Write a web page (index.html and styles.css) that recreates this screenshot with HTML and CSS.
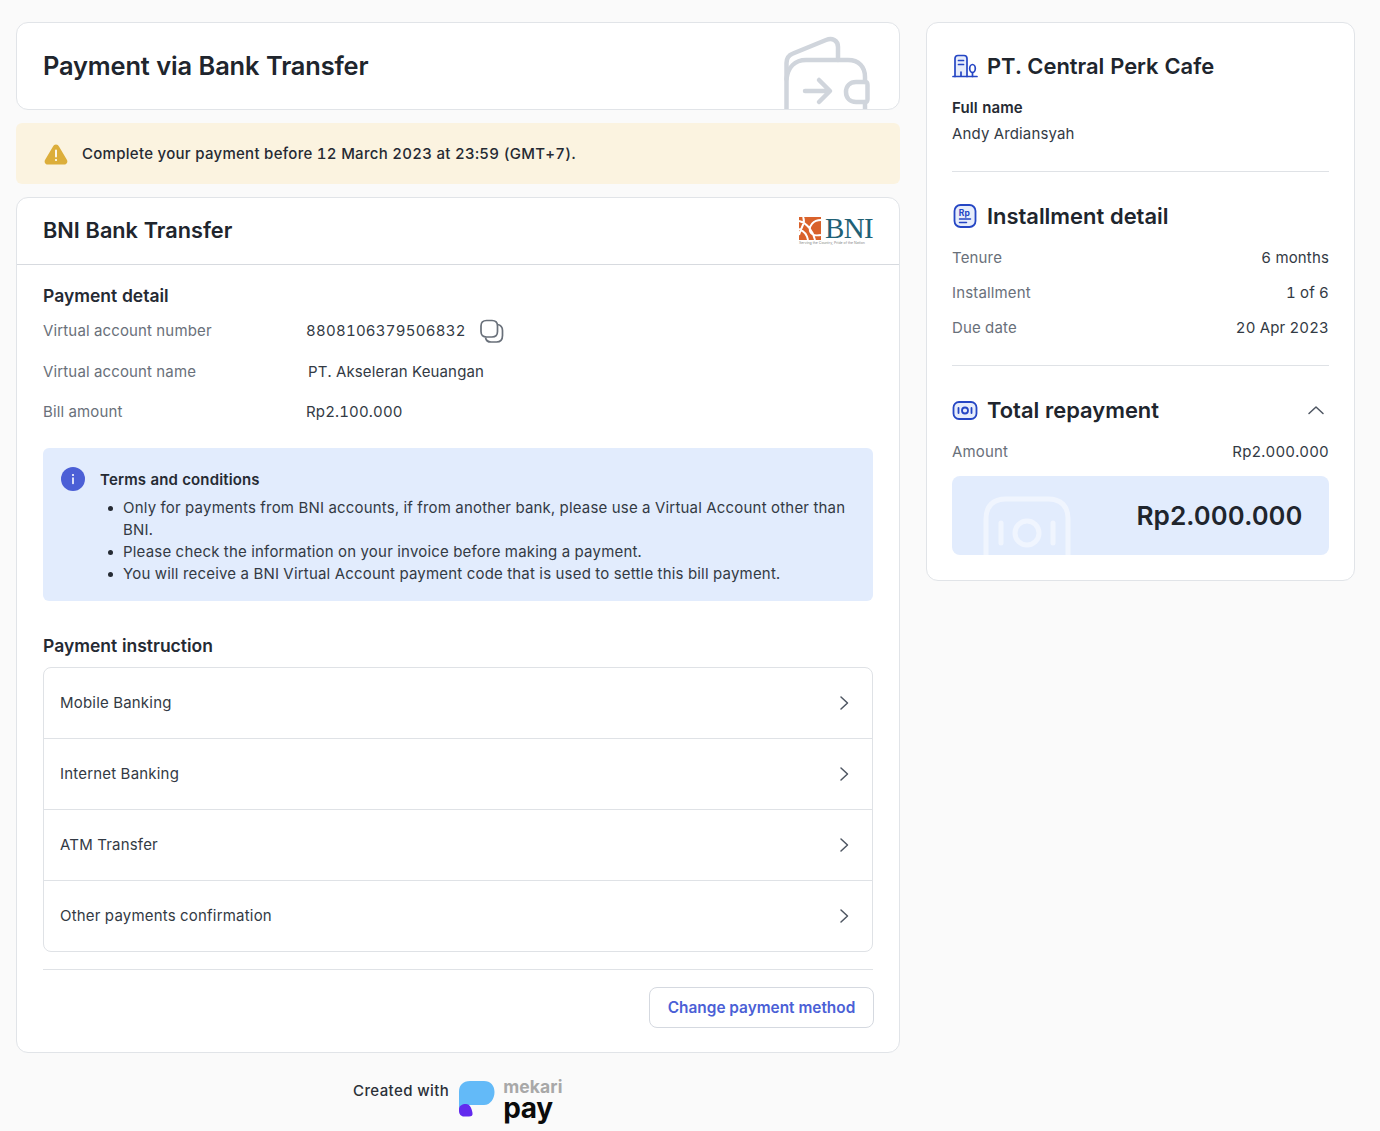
FILE: index.html
```html
<!DOCTYPE html>
<html lang="en">
<head>
<meta charset="utf-8">
<title>Payment via Bank Transfer</title>
<link rel="stylesheet" href="styles.css">
</head>
<body>
<div class="layout">
  <main class="left">
    <section class="card hero">
      <h1>Payment via Bank Transfer</h1>
      <svg class="wallet" width="90" height="74" viewBox="0 0 90 74" fill="none" stroke="#d0d5dc" stroke-width="4.5" stroke-linecap="round" stroke-linejoin="round">
        <path d="M4.500 76V28C4.500 23 7 20 11 18.500L44 5C50 2.500 56 5 56 12V25"/>
        <path d="M4.500 44C6 32 13 25 24 25H66C77 25 83 32 83 42V47M83 67V76"/>
        <path d="M23 56H47M37 45L48 56L37 67"/>
        <path d="M74 47H83C85 47 85.500 48 85.500 50V64C85.500 66 85 67 83 67H74C68 67 64 63 64 57C64 51 68 47 74 47Z"/>
      </svg>
    </section>

    <div class="banner">
      <svg class="warn" width="26" height="24" viewBox="0 0 26 24"><path d="M13 2.500C11.500 2.500 10.700 3.400 10 4.600L2 18C1 20 2.200 22.500 4.500 22.500H21.500C23.800 22.500 25 20 24 18L16 4.600C15.300 3.400 14.500 2.500 13 2.500Z" fill="#dcae3b"/><path d="M13 8.500V14.500" stroke="#fff" stroke-width="1.800" stroke-linecap="round"/><circle cx="13" cy="18" r="1.100" fill="#fff"/></svg>
      <span>Complete your payment before 12 March 2023 at 23:59 (GMT+7).</span>
    </div>

    <section class="card detail">
      <header class="detail-head">
        <h2>BNI Bank Transfer</h2>
        <div class="bni">
          <svg width="22" height="23" viewBox="0 0 22 23"><rect width="22" height="23" fill="#d9622b"/><path d="M0 4C8 6 14 14 16 23M0 12C5 14 8 18 9 23M4 0C7 6 2 10 0 18M22 3C14 3 10 9 11 14C12 18 17 19 22 18" fill="none" stroke="#fff" stroke-width="2"/></svg>
          <span class="bni-name">BNI</span>
          <span class="bni-tag">Serving the Country, Pride of the Nation</span>
        </div>
      </header>

      <div class="detail-body">
        <h3 class="pd-title">Payment detail</h3>
        <dl class="facts">
          <div class="fact fact-va"><dt>Virtual account number</dt><dd class="va">8808106379506832
            <svg class="copy" width="26" height="26" viewBox="0 0 26 26" fill="none" stroke="#69707a" stroke-width="1.700"><path d="M8.500 2.500H14C17.500 2.500 19.500 4.500 19.500 8V13.500C19.500 17 17.500 19 14 19H8.500C5 19 3 17 3 13.500V8C3 4.500 5 2.500 8.500 2.500Z"/><path d="M19.500 6.500C22.500 7 24.500 9 24.500 12.500V17.500C24.500 21.500 22.500 24 18.500 24H13C10 24 8 22.500 7.500 19.500"/></svg>
          </dd></div>
          <div class="fact fact-name"><dt>Virtual account name</dt><dd class="shift">PT. Akseleran Keuangan</dd></div>
          <div class="fact fact-bill"><dt>Bill amount</dt><dd>Rp2.100.000</dd></div>
        </dl>

        <div class="terms">
          <svg class="info" width="24" height="24" viewBox="0 0 24 24"><circle cx="12" cy="12" r="12" fill="#4b5fd6"/><circle cx="12" cy="8" r="1.100" fill="#fff"/><path d="M12 11V16.500" stroke="#fff" stroke-width="1.600" stroke-linecap="round"/></svg>
          <div class="terms-body">
            <h4>Terms and conditions</h4>
            <ul>
              <li>Only for payments from BNI accounts, if from another bank, please use a Virtual Account other than BNI.</li>
              <li>Please check the information on your invoice before making a payment.</li>
              <li>You will receive a BNI Virtual Account payment code that is used to settle this bill payment.</li>
            </ul>
          </div>
        </div>

        <h3 class="pi-title">Payment instruction</h3>
        <div class="accordion">
          <div class="acc-row"><span>Mobile Banking</span><svg width="10" height="16" viewBox="0 0 10 16" fill="none" stroke="#4e5662" stroke-width="1.500" stroke-linecap="round" stroke-linejoin="round"><path d="M2 2L8.500 8L2 14"/></svg></div>
          <div class="acc-row"><span>Internet Banking</span><svg width="10" height="16" viewBox="0 0 10 16" fill="none" stroke="#4e5662" stroke-width="1.500" stroke-linecap="round" stroke-linejoin="round"><path d="M2 2L8.500 8L2 14"/></svg></div>
          <div class="acc-row"><span>ATM Transfer</span><svg width="10" height="16" viewBox="0 0 10 16" fill="none" stroke="#4e5662" stroke-width="1.500" stroke-linecap="round" stroke-linejoin="round"><path d="M2 2L8.500 8L2 14"/></svg></div>
          <div class="acc-row"><span>Other payments confirmation</span><svg width="10" height="16" viewBox="0 0 10 16" fill="none" stroke="#4e5662" stroke-width="1.500" stroke-linecap="round" stroke-linejoin="round"><path d="M2 2L8.500 8L2 14"/></svg></div>
        </div>

        <div class="actions"><button class="btn" type="button">Change payment method</button></div>
      </div>
    </section>

    <footer class="credit">
      <span class="credit-text">Created with</span>
      <svg width="37" height="37" viewBox="0 0 37 37"><path d="M12 1H26C32.500 1 36.500 5.500 36.500 12C36.500 18.500 32.500 25 26 25H13C9 25 8 26 7 26C3 26 1 27 1 29V12C1 5 5 1 12 1Z" fill="#63baf8"/><path d="M1 29C1 26 4 24 8 24C12 24 14 29 14.500 33C15 35.500 13.500 36.500 11 36.500H6C3 36.500 1 34 1 31Z" fill="#6229ee"/></svg>
      <div class="brand"><span class="brand-top">mekari</span><span class="brand-pay">pay</span></div>
    </footer>
  </main>

  <aside class="card side">
    <section class="side-sec sec-company">
      <div class="side-head">
        <svg width="26" height="24" viewBox="0 0 26 24" fill="none" stroke="#2546c4" stroke-width="1.700" stroke-linecap="round"><path d="M3 22.500V4.500C3 2.500 4 1.500 6 1.500H12C14 1.500 15 2.500 15 4.500V22.500" fill="#e7edfb"/><path d="M6.500 6.500H11.500M6.500 10.500H11.500M9 18V22"/><path d="M1 22.500H25"/><ellipse cx="20.500" cy="14.500" rx="2.800" ry="4"/><path d="M20.500 18.500V22.500"/></svg>
        <h2>PT. Central Perk Cafe</h2>
      </div>
      <div class="name-label">Full name</div>
      <div class="name-value">Andy Ardiansyah</div>
    </section>

    <section class="side-sec sec-install">
      <div class="side-head">
        <svg width="26" height="24" viewBox="0 0 26 24" fill="none" stroke="#2546c4" stroke-width="1.800"><rect x="2.500" y="1" width="21" height="22" rx="6" fill="#e7edfb"/><text class="rp" x="6.800" y="11.500">Rp</text><path d="M7.500 15H18.500M7.500 18.500H14.500" stroke-width="1.500" stroke-linecap="round"/></svg>
        <h2>Installment detail</h2>
      </div>
      <div class="kv kv-first"><span>Tenure</span><b>6 months</b></div>
      <div class="kv"><span>Installment</span><b>1 of 6</b></div>
      <div class="kv"><span>Due date</span><b>20 Apr 2023</b></div>
    </section>

    <section class="sec-total">
      <div class="side-head total-head">
        <svg width="26" height="24" viewBox="0 0 26 24" fill="none" stroke="#2546c4" stroke-width="1.800" stroke-linecap="round"><rect x="1.500" y="4" width="23" height="17" rx="5.500" fill="#e7edfb"/><circle cx="13" cy="12.500" r="3"/><path d="M6.500 10V15M19.500 10V15"/></svg>
        <h2>Total repayment</h2>
        <svg class="caret" width="18" height="10" viewBox="0 0 18 10" fill="none" stroke="#4e5662" stroke-width="1.500" stroke-linecap="round" stroke-linejoin="round"><path d="M2 8.500L9 2L16 8.500"/></svg>
      </div>
      <div class="kv kv-first"><span>Amount</span><b>Rp2.000.000</b></div>
      <div class="total-box">
        <svg class="total-bg" width="88" height="59" viewBox="0 0 88 59" fill="none" stroke="#f0f5fe" stroke-width="5" stroke-linecap="round"><path d="M3 59V23C3 10 10 3 23 3H65C78 3 85 10 85 23V59"/><circle cx="44" cy="37" r="12"/><path d="M18 27V47M70 27V47"/></svg>
        <span>Rp2.000.000</span>
      </div>
    </section>
  </aside>
</div>
</body>
</html>
```

FILE: styles.css
```css
* { box-sizing: border-box; }
html, body { margin: 0; padding: 0; }
body {
  background: #fafafa;
  color: #252a33;
  font-family: Inter, "Liberation Sans", sans-serif;
  font-size: 15px;
  letter-spacing: 0.15px;
  font-variant-numeric: tabular-nums;
  height: 1131px;
  overflow: hidden;
}
h1, h2, h3, h4, dl, dd, ul { margin: 0; padding: 0; }

.layout {
  display: grid;
  grid-template-columns: 884px 429px;
  column-gap: 26px;
  align-items: start;
  padding: 22px 24px 0 16px;
}
.left { display: flex; flex-direction: column; min-width: 0; }

.card {
  background: #fff;
  border: 1px solid #e1e4e8;
  border-radius: 12px;
}

/* hero */
.hero {
  height: 88px;
  display: flex;
  align-items: center;
  justify-content: space-between;
  padding: 0 27px 0 26px;
  overflow: hidden;
}
.hero h1 { font-size: 25.400px; font-weight: 600; letter-spacing: -0.15px; color: #20252d; margin-bottom: 2px; }
.wallet { align-self: flex-end; flex: none; }

/* banner */
.banner {
  margin-top: 13px;
  height: 61px;
  background: #fbf3e0;
  border-radius: 6px;
  display: flex;
  align-items: center;
  gap: 13px;
  padding: 0 27px;
  font-weight: 500;
  letter-spacing: 0.28px;
  color: #252a33;
}
.warn { flex: none; }

/* detail */
.detail { margin-top: 13px; height: 856px; }
.detail-head {
  height: 66px;
  border-bottom: 1px solid #d7dadf;
  display: flex;
  align-items: center;
  justify-content: space-between;
  padding: 0 25px 0 26px;
  box-sizing: content-box;
}
.detail-head h2 { font-size: 21.700px; font-weight: 600; letter-spacing: 0; color: #20252d; margin-bottom: 2px; }
.bni {
  position: relative;
  display: flex;
  align-items: flex-start;
  gap: 4px;
  width: 75px;
  height: 28px;
}
.bni svg { flex: none; }
.bni-name {
  font-family: "Liberation Serif", serif;
  font-size: 29px;
  line-height: 23px;
  color: #1f6176;
  letter-spacing: -0.6px;
}
.bni-tag {
  position: absolute;
  left: 0;
  top: 24px;
  font-size: 3.500px;
  line-height: 4px;
  letter-spacing: 0;
  white-space: nowrap;
  color: #888;
}
.detail-body { padding: 0 26px; }
.pd-title { font-size: 17.500px; font-weight: 600; letter-spacing: 0; line-height: 22px; padding-top: 20px; box-sizing: content-box; height: 22px; }
.facts { margin-top: 11px; }
.fact { display: grid; grid-template-columns: 263px 1fr; align-items: center; line-height: 22px; }
.fact dt { color: #69707a; }
.fact dd { color: #333a44; }
.fact-va { height: 26px; }
.fact-name { margin-top: 17px; }
.fact-bill { margin-top: 18px; }
.va { display: flex; align-items: center; gap: 12px; letter-spacing: 0.25px; }
.shift { padding-left: 2px; }
.copy { flex: none; }

/* terms */
.terms {
  margin-top: 25px;
  height: 153px;
  background: #e2ecfd;
  border-radius: 6px;
  display: flex;
  gap: 15px;
  padding: 19px 18px;
}
.info { flex: none; }
.terms-body { flex: 1; min-width: 0; }
.terms h4 { font-size: 15px; font-weight: 600; line-height: 22px; margin-top: 2px; }
.terms ul { list-style: none; margin-top: 6px; letter-spacing: 0.2px; }
.terms li { position: relative; padding-left: 23px; line-height: 22px; color: #333a44; }
.terms li::before {
  content: "";
  position: absolute;
  left: 8px;
  top: 9px;
  width: 5px;
  height: 5px;
  border-radius: 50%;
  background: #252a33;
}

/* accordion */
.pi-title { font-size: 17.500px; font-weight: 600; letter-spacing: 0; line-height: 22px; margin-top: 34px; }
.accordion {
  margin-top: 10px;
  border: 1px solid #dfe2e6;
  border-radius: 8px;
  height: 285px;
  display: flex;
  flex-direction: column;
}
.acc-row {
  flex: 1;
  display: flex;
  align-items: center;
  justify-content: space-between;
  padding: 0 23px 1px 16px;
  color: #333a44;
  letter-spacing: 0.2px;
}
.acc-row + .acc-row { border-top: 1px solid #dfe2e6; }

.actions {
  margin-top: 17px;
  border-top: 1px solid #dfe2e6;
  padding-top: 17px;
  display: flex;
  justify-content: flex-end;
}
.btn {
  width: 225px;
  height: 41px;
  margin-right: -1px;
  background: #fff;
  border: 1px solid #d5d9e0;
  border-radius: 8px;
  color: #4b5fd6;
  font: 600 15.400px Inter, "Liberation Sans", sans-serif;
  padding: 0;
}

/* credit */
.credit {
  display: flex;
  align-items: flex-start;
  margin-top: 27px;
  padding-left: 337px;
}
.credit-text { font-weight: 500; letter-spacing: 0.4px; color: #2a3038; line-height: 22px; margin-right: 9px; }
.credit svg { flex: none; margin-right: 8px; }
.brand { display: flex; flex-direction: column; margin-top: -1px; }
.brand-top { font-weight: 700; font-size: 17.500px; line-height: 16px; color: #a8a8a8; letter-spacing: 0.1px; }
.brand-pay { font-weight: 700; font-size: 28px; line-height: 26px; color: #0b0b0b; letter-spacing: -0.4px; }

/* side */
.side { padding: 0 25px 25px 25px; }
.side-head { display: flex; align-items: center; gap: 9px; height: 30px; }
.side-head svg { flex: none; }
.side-head h2 { font-size: 21.900px; font-weight: 600; letter-spacing: 0; color: #20252d; }
.sec-company { padding-top: 28px; height: 149px; }
.side-sec { border-bottom: 1px solid #dfe2e6; }
.name-label { font-weight: 600; line-height: 22px; margin-top: 16px; }
.name-value { line-height: 22px; margin-top: 4px; color: #333a44; }
.sec-install { padding-top: 29px; height: 194px; }
.kv { display: flex; justify-content: space-between; line-height: 22px; margin-top: 13px; }
.kv-first { margin-top: 16px; }
.kv span { color: #69707a; }
.kv b { font-weight: 400; color: #333a44; }
.sec-total { padding-top: 29px; }
.total-head { position: relative; }
.side-head .caret { margin-left: auto; margin-right: 4px; }
.rp { font: 700 8.500px Inter, "Liberation Sans", sans-serif; fill: #2546c4; stroke: none; }

.total-box {
  position: relative;
  margin-top: 13px;
  height: 79px;
  background: #e2ecfd;
  border-radius: 8px;
  display: flex;
  align-items: center;
  justify-content: flex-end;
  padding-right: 26.500px;
  overflow: hidden;
  font-size: 26.200px;
  font-weight: 600;
  letter-spacing: 0;
  color: #20252d;
}
.total-bg { position: absolute; left: 31px; bottom: 0; }
.total-box span { position: relative; }
```
